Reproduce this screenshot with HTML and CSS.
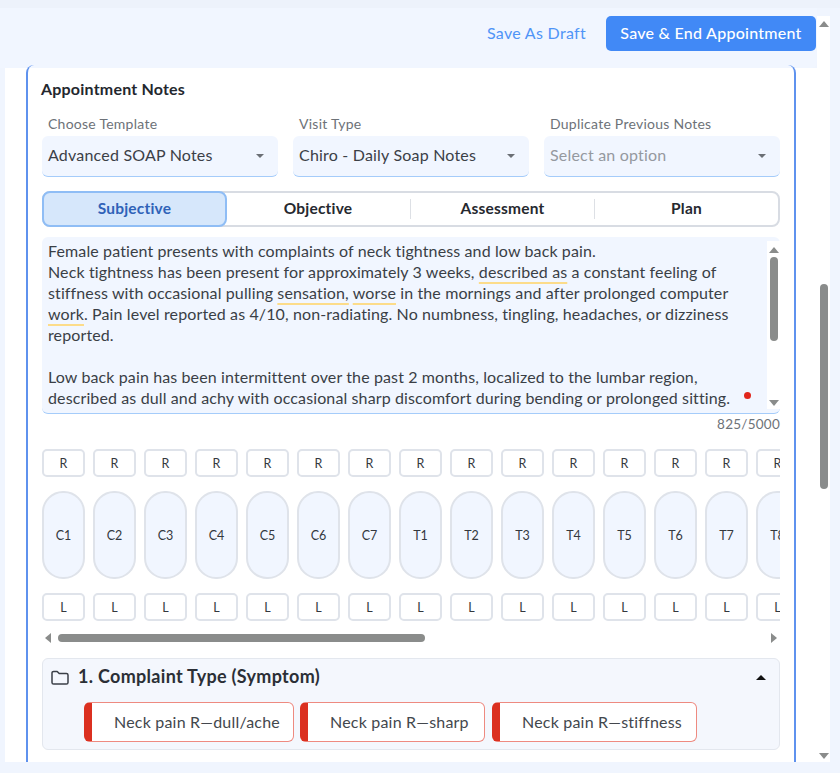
FILE: index.html
```html
<!DOCTYPE html>
<html lang="en">
<head>
<meta charset="utf-8">
<title>Appointment Notes</title>
<link rel="stylesheet" href="styles.css">
</head>
<body>
<header class="topbar">
  <a class="draft">Save As Draft</a>
  <button class="primary">Save &amp; End Appointment</button>
</header>
<div class="panel">
  <main class="card">
    <h1 class="title">Appointment Notes</h1>
    <div class="fields">
      <div class="field"><label class="label">Choose Template</label><div class="select"><span>Advanced SOAP Notes</span><i class="caret"></i></div></div>
      <div class="field"><label class="label">Visit Type</label><div class="select"><span>Chiro - Daily Soap Notes</span><i class="caret"></i></div></div>
      <div class="field"><label class="label">Duplicate Previous Notes</label><div class="select placeholder"><span>Select an option</span><i class="caret"></i></div></div>
    </div>
    <div class="tabs">
      <div class="tab active">Subjective</div>
      <div class="tab">Objective</div>
      <div class="tab sep">Assessment</div>
      <div class="tab sep">Plan</div>
    </div>
    <div class="notes">
      <div class="notes-text">Female patient presents with complaints of neck tightness and low back pain.
Neck tightness has been present for approximately 3 weeks, <u>described as</u> a constant feeling of
stiffness with occasional pulling <u>sensation,</u> <u>worse</u> in the mornings and after prolonged computer
<u>work</u>. Pain level reported as 4/10, non-radiating. No numbness, tingling, headaches, or dizziness
reported.

Low back pain has been intermittent over the past 2 months, localized to the lumbar region,
described as dull and achy with occasional sharp discomfort during bending or prolonged sitting.<b class="dot"></b></div>
      <div class="vbar small"><i class="arrow up"></i><div class="track"><i class="thumb"></i></div><i class="arrow down"></i></div>
    </div>
    <div class="count">825/5000</div>
    <div class="spine">
      <div class="spine-row">
        <span class="tick">R</span><span class="tick">R</span><span class="tick">R</span><span class="tick">R</span><span class="tick">R</span><span class="tick">R</span><span class="tick">R</span><span class="tick">R</span><span class="tick">R</span><span class="tick">R</span><span class="tick">R</span><span class="tick">R</span><span class="tick">R</span><span class="tick">R</span><span class="tick">R</span>
      </div>
      <div class="spine-row">
        <span class="seg">C1</span><span class="seg">C2</span><span class="seg">C3</span><span class="seg">C4</span><span class="seg">C5</span><span class="seg">C6</span><span class="seg">C7</span><span class="seg">T1</span><span class="seg">T2</span><span class="seg">T3</span><span class="seg">T4</span><span class="seg">T5</span><span class="seg">T6</span><span class="seg">T7</span><span class="seg">T8</span>
      </div>
      <div class="spine-row">
        <span class="tick">L</span><span class="tick">L</span><span class="tick">L</span><span class="tick">L</span><span class="tick">L</span><span class="tick">L</span><span class="tick">L</span><span class="tick">L</span><span class="tick">L</span><span class="tick">L</span><span class="tick">L</span><span class="tick">L</span><span class="tick">L</span><span class="tick">L</span><span class="tick">L</span>
      </div>
    </div>
    <div class="hbar"><i class="arrow left"></i><div class="htrack"><i class="hthumb"></i></div><i class="arrow right"></i></div>
    <section class="group">
      <div class="group-head">
        <svg class="folder" width="18" height="15" viewBox="0 0 18 15" fill="none" stroke="#3a3f47" stroke-width="1.5" stroke-linejoin="round"><path d="M1 3a1.6 1.6 0 0 1 1.6-1.6h3.6l2 2.1h7.2A1.6 1.6 0 0 1 17 5.1v7.3a1.6 1.6 0 0 1-1.6 1.6H2.6A1.6 1.6 0 0 1 1 12.400z"/></svg>
        <h2 class="group-title">1. Complaint Type (Symptom)</h2>
        <i class="group-caret"></i>
      </div>
      <div class="chips">
        <span class="chip chip-a">Neck pain R—dull/ache</span>
        <span class="chip chip-b">Neck pain R—sharp</span>
        <span class="chip chip-c">Neck pain R—stiffness</span>
      </div>
    </section>
  </main>
  <div class="vbar page"><i class="arrow up"></i><div class="track"><i class="thumb"></i></div><i class="arrow down"></i></div>
</div>
</body>
</html>
```
FILE: styles.css
```css
* { box-sizing: border-box; }
html, body { margin: 0; height: 773px; overflow: hidden; }
body {
  background: #f0f5fe;
  border-top: 8px solid #edf2fb;
  font-family: Lato, sans-serif;
  color: #2f343b;
}
.topbar {
  width: 817px;
  height: 60px;
  background: #f1f6ff;
  border-bottom-right-radius: 6px;
  display: flex;
  align-items: flex-start;
  justify-content: flex-end;
  padding: 8px 1px 0 0;
  gap: 20px;
}
.draft { font-size: 16px; line-height: 33px; letter-spacing: 0.3px; color: #4f94f7; }
.primary {
  width: 210px;
  height: 35px;
  border: 0;
  border-radius: 5px;
  background: #4189f6;
  color: #fff;
  padding: 0 0 2px;
  font: 500 16px Lato, sans-serif;
  letter-spacing: 0.25px;
}
.panel {
  margin-left: 5px;
  width: 825px;
  height: 694px;
  background: #fff;
  display: flex;
}
.card {
  margin: -3px 0 0 21px;
  width: 770px;
  height: 697px;
  flex: none;
  border-left: 2px solid #5f92ee;
  border-right: 2px solid #5f92ee;
  border-radius: 8px 8px 0 0;
  padding: 14px 14px 0;
  position: relative;
}
.title {
  margin: 0 0 0 -1px;
  font-size: 16px;
  line-height: 20px;
  letter-spacing: 0.2px;
  font-weight: 700;
  color: #23272e;
}
.fields {
  margin-top: 16px;
  display: grid;
  grid-template-columns: repeat(3, 236px);
  gap: 15px;
}
.label {
  display: block;
  padding-left: 6px;
  font-size: 14px;
  line-height: 18px;
  letter-spacing: 0.25px;
  color: #6d7278;
}
.select {
  margin-top: 3px;
  height: 41px;
  background: #f1f6ff;
  border-bottom: 1px solid #a5ccfa;
  border-radius: 6px;
  padding: 0 14px 0 6px;
  display: flex;
  align-items: center;
  justify-content: space-between;
  font-size: 16px;
  letter-spacing: 0.2px;
  color: #3b4047;
}
.select span { margin-bottom: 4px; }
.placeholder { color: #95999f; }
.caret {
  width: 0;
  height: 0;
  border: 4px solid transparent;
  border-top: 4px solid #6b6f75;
  border-bottom: 0;
}
.tabs {
  margin-top: 14px;
  height: 36px;
  border: 2px solid #d8dce3;
  border-radius: 8px;
  display: grid;
  grid-template-columns: 182px 184px 184px 1fr;
  align-items: center;
  position: relative;
}
.tab {
  text-align: center;
  font-size: 15.500px;
  line-height: 18px;
  letter-spacing: 0.2px;
  font-weight: 700;
  padding-bottom: 2px;
  color: #26292f;
}
.sep { border-left: 1px solid #dde0e5; }
.active {
  margin: -2px 0 -2px -2px;
  height: 36px;
  line-height: 30px;
  width: 185px;
  background: #d6e7fb;
  border: 2px solid #8fbdf5;
  border-radius: 8px;
  color: #2f62b8;
}
.notes {
  margin-top: 10px;
  height: 177px;
  background: #f1f6ff;
  border-bottom: 1px solid #a5ccfa;
  border-radius: 6px;
  display: flex;
  align-items: center;
}
.notes-text {
  flex: 1;
  height: 170px;
  padding: 0 0 0 6px;
  white-space: pre;
  font-size: 16px;
  line-height: 21px;
  letter-spacing: 0.12px;
  color: #3a3f46;
  position: relative;
}
.notes-text u {
  text-decoration: underline;
  text-decoration-color: #fcdc8a;
  text-decoration-thickness: 1.5px;
  text-underline-offset: 4px;
}
.dot {
  position: absolute;
  left: 702px;
  top: 152px;
  width: 7px;
  height: 7px;
  border-radius: 50%;
  background: #e1261c;
}
.vbar {
  flex: none;
  width: 13px;
  background: #fff;
  display: flex;
  flex-direction: column;
  align-items: center;
}
.vbar.small { height: 168px; padding: 6px 0 3px; }
.vbar.page { height: 746px; margin: -52px 0 0 21px; padding: 5px 0 3px; position: relative; }
.track { flex: 1; width: 8px; }
.thumb { display: block; width: 8px; background: #8a8c8b; border-radius: 4px; }
.small .track { padding-top: 4px; }
.small .thumb { height: 84px; }
.page .track { padding-top: 257px; }
.page .thumb { height: 205px; }
.arrow { display: block; width: 0; height: 0; border: 5px solid transparent; flex: none; }
.arrow.up { border-top: 0; border-bottom: 6px solid #8a8c8b; }
.arrow.down { border-bottom: 0; border-top: 6px solid #8a8c8b; }
.arrow.left { border-left: 0; border-right: 6px solid #8a8c8b; }
.arrow.right { border-right: 0; border-left: 6px solid #8a8c8b; }
.count {
  margin-top: 1px;
  text-align: right;
  font-size: 13.500px;
  line-height: 18px;
  letter-spacing: 0.25px;
  color: #6d7278;
}
.spine {
  margin-top: 16px;
  overflow: hidden;
  display: flex;
  flex-direction: column;
  gap: 14px;
}
.spine-row { display: flex; gap: 8px; }
.tick, .seg {
  flex: none;
  width: 43px;
  border: 2px solid #dfe3ea;
  display: flex;
  align-items: center;
  justify-content: center;
  font-size: 12.500px;
  color: #34383e;
  background: #fff;
}
.tick { height: 28px; border-radius: 5px; }
.seg { height: 88px; border-radius: 21px; background: #f1f6ff; }
.hbar {
  margin-top: 11px;
  height: 12px;
  display: flex;
  align-items: center;
  padding: 0 3px 0 3px;
}
.htrack { flex: 1; padding: 0 0 0 7px; }
.hthumb { display: block; width: 367px; height: 8px; border-radius: 4px; background: #8a8c8b; }
.group {
  margin-top: 14px;
  height: 92px;
  background: #f4f7fd;
  border: 1px solid #e3e7ee;
  border-radius: 6px;
  padding: 0 0 0 8px;
}
.group-head {
  height: 36px;
  display: flex;
  align-items: center;
  gap: 9px;
  padding-right: 13px;
}
.group-title {
  margin: 0 0 2px;
  flex: 1;
  font-size: 18px;
  letter-spacing: 0.3px;
  font-weight: 700;
  color: #2b2f36;
}
.group-caret {
  width: 0;
  height: 0;
  border: 5px solid transparent;
  border-bottom: 5px solid #111;
  border-top: 0;
}
.chips { margin-top: 7px; padding-left: 33px; display: flex; gap: 7px; }
.chip {
  height: 40px;
  border: 1px solid #ee8a80;
  border-left: 8px solid #db3020;
  border-radius: 6px;
  background: #fff;
  display: flex;
  align-items: center;
  padding: 0 0 2px 22px;
  font-size: 16px;
  letter-spacing: 0.2px;
  color: #43474d;
}
.chip-a { width: 210px; }
.chip-b { width: 185px; margin-left: -1px; }
.chip-c { width: 205px; }
```
